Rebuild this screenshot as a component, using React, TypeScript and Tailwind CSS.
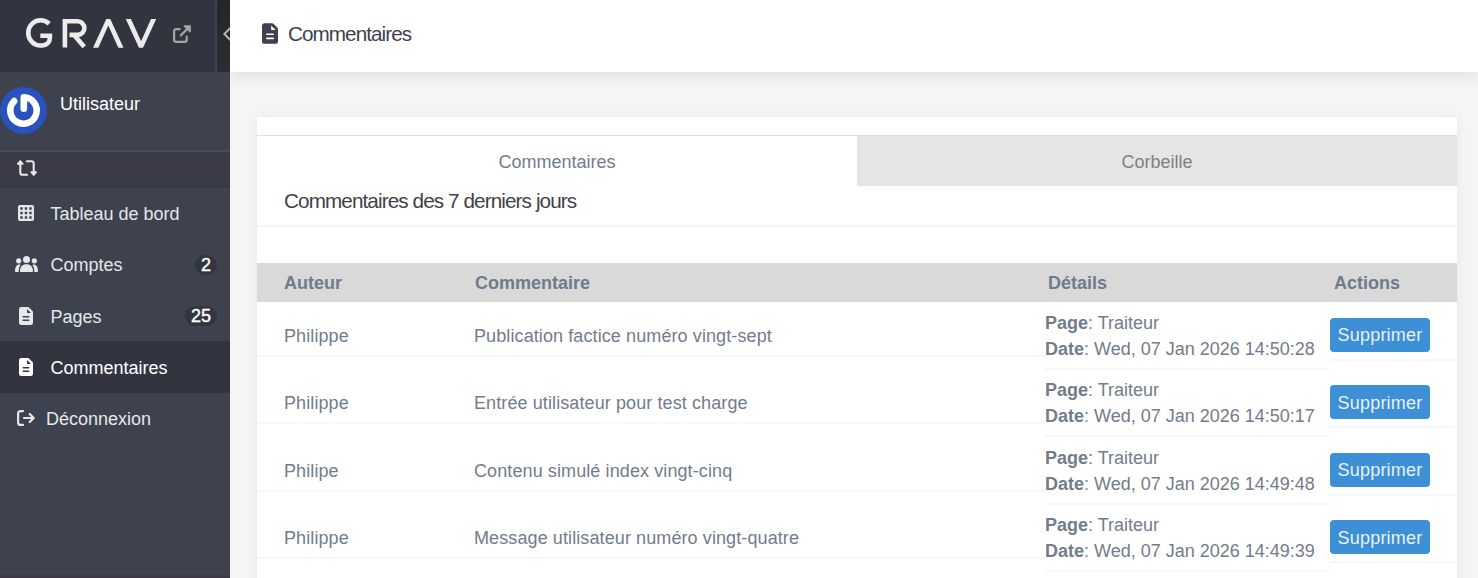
const comments = [
  { author: "Philippe", text: "Publication factice numéro vingt-sept", date: "Wed, 07 Jan 2026 14:50:28" },
  { author: "Philippe", text: "Entrée utilisateur pour test charge", date: "Wed, 07 Jan 2026 14:50:17" },
  { author: "Philipe", text: "Contenu simulé index vingt-cinq", date: "Wed, 07 Jan 2026 14:49:48" },
  { author: "Philippe", text: "Message utilisateur numéro vingt-quatre", date: "Wed, 07 Jan 2026 14:49:39" },
];

function FileIcon({ className }: { className: string }) {
  return (
    <svg className={className} viewBox="0 0 14 18" fill="currentColor">
      <path
        fillRule="evenodd"
        d="M2.3 0H8.8c.5 0 .9.2 1.2.5L13.5 4c.3.3.5.8.5 1.2v10.5A2.3 2.3 0 0 1 11.7 18H2.3A2.3 2.3 0 0 1 0 15.7V2.3A2.3 2.3 0 0 1 2.3 0zM8 2v3c0 .6.4 1 1 1h3zM4.2 9a.7.7 0 0 0 0 1.4h5.600a.7.7 0 0 0 0-1.4zM4.2 12.600a.7.7 0 0 0 0 1.4h5.600a.7.7 0 0 0 0-1.4z"
      />
    </svg>
  );
}

function GridIcon() {
  return (
    <svg className="w-4 h-4" viewBox="0 0 16 16" fill="currentColor">
      <path
        fillRule="evenodd"
        d="M2 0h12a2 2 0 0 1 2 2v12a2 2 0 0 1-2 2H2a2 2 0 0 1-2-2V2a2 2 0 0 1 2-2zM2.3 2.3v2.4h2.4V2.3zM6.8 2.3v2.4h2.4V2.3zM11.3 2.3v2.4h2.4V2.3zM2.3 6.8v2.4h2.4V6.8zM6.8 6.8v2.4h2.4V6.8zM11.3 6.8v2.4h2.4V6.8zM2.3 11.3v2.4h2.4v-2.4zM6.8 11.3v2.4h2.4v-2.4zM11.3 11.3v2.4h2.4v-2.4z"
      />
    </svg>
  );
}

function UsersIcon() {
  return (
    <svg className="w-[23px] h-4" viewBox="0 0 23 16" fill="currentColor">
      <circle cx="11.5" cy="3.5" r="3.5" />
      <circle cx="3.7" cy="4.8" r="2.6" />
      <circle cx="19.3" cy="4.8" r="2.6" />
      <path d="M5.8 16a.8.8 0 0 1-.8-.9C5 11 7.600 8.300 11.500 8.300S18 11 18 15.100a.8.8 0 0 1-.8.9z" />
      <path d="M5.600 9C4.200 10.700 3.700 12.800 3.700 16H.8a.8.8 0 0 1-.8-.8C0 11 1.900 8.600 4.200 8.600c.5 0 1 .1 1.400.4z" />
      <path d="M17.400 9c1.400 1.700 1.900 3.800 1.900 7h2.900a.8.8 0 0 0 .8-.8c0-4.200-1.900-6.600-4.200-6.600-.5 0-1 .1-1.400.4z" />
    </svg>
  );
}

function LogoutIcon() {
  return (
    <svg className="w-[18px] h-4" viewBox="0 0 18 16" fill="none" stroke="currentColor" strokeWidth="2.2" strokeLinecap="round" strokeLinejoin="round">
      <path d="M6 1.100H3.600A2.500 2.500 0 0 0 1.100 3.600v8.800a2.500 2.500 0 0 0 2.500 2.500H6M7 8h9.600M12.700 4l4 4-4 4" />
    </svg>
  );
}

function RetweetIcon() {
  return (
    <svg className="w-5 h-4" viewBox="0 0 20 16" fill="none" stroke="currentColor" strokeWidth="2.1" strokeLinecap="round" strokeLinejoin="round">
      <path d="M3.300 3.500v8.900c0 1.500.8 2.400 2.300 2.400h4.500M9.900 1.200h4.500c1.500 0 2.300.9 2.300 2.400v8.900" />
      <path d="M.9 3.900 3.300 1l2.400 2.900zM14.300 12.100l2.400 2.900 2.400-2.900z" fill="currentColor" strokeWidth="1.700" />
    </svg>
  );
}

function ExternalIcon() {
  return (
    <svg className="w-[18px] h-[18px]" viewBox="0 0 18 18" fill="none" stroke="currentColor" strokeWidth="2.2" strokeLinecap="round" strokeLinejoin="round">
      <path d="M6.600 4.200H3.300A2.200 2.200 0 0 0 1.100 6.400v8.300a2.200 2.200 0 0 0 2.200 2.200h8.200a2.200 2.200 0 0 0 2.200-2.200V11.700M7.800 10.400 14.500 3.700" />
      <path d="M11.400 1.100h5.700v5.700z" fill="currentColor" strokeWidth="1.500" />
    </svg>
  );
}

function GravLogo() {
  return (
    <svg className="w-[131px] h-[30px]" viewBox="0 0 131 30" fill="none" stroke="currentColor" strokeWidth="4.600">
      <path d="M23.200 5.700C20.700 3.400 17.900 2.300 14.700 2.300A12.400 12.400 0 0 0 2.300 14.900 12.400 12.400 0 0 0 14.700 27.500H15.500C21 27.500 23.900 24 23.900 19.500V17.700H14.300" />
      <path d="M38.900 29.500V3.300H51.600a6.800 6.800 0 0 1 0 13.600H43.500M48.500 17.500 58.200 28.800" />
      <path
        stroke="none"
        fill="currentColor"
        d="M67 29.700 80.300 1h4L97.500 29.700H92.300L82.300 7.600 72.300 29.700zM99.800 1h5.200l10.100 22.200L125 1h5.200L117 29.700h-4z"
      />
    </svg>
  );
}

function GravatarLogo() {
  return (
    <svg className="w-[47px] h-[47px]" viewBox="0 0 47 47" fill="none" stroke="white" strokeWidth="6.6" strokeLinecap="round">
      <circle cx="23.500" cy="23.500" r="23.500" fill="#2a52be" stroke="none" />
      <path d="M23.800 21.700V10.300A13.200 13.200 0 1 1 14.200 14.100" strokeLinejoin="round" />
    </svg>
  );
}

const menu = [
  { label: "Tableau de bord", icon: <GridIcon /> },
  { label: "Comptes", icon: <UsersIcon />, count: 2 },
  { label: "Pages", icon: <FileIcon className="w-[14px] h-[18px]" />, count: 25 },
  { label: "Commentaires", icon: <FileIcon className="w-[14px] h-[18px]" />, active: true },
];

function Sidebar() {
  return (
    <aside className="relative z-10 flex flex-col w-[230px] shrink-0 bg-[#3d424e] border-b-[3px] border-[#40394a] text-[#e6e7e9]">
      <div className="flex h-[72px] shrink-0">
        <div className="flex w-[217px] bg-[#32353f] border-r-2 border-[#3d424e] pl-[26px]">
          <div className="pt-[18px] text-[#ececec]">
            <GravLogo />
          </div>
          <div className="pt-[25px] pl-[16px] text-[#a3a5a9]">
            <ExternalIcon />
          </div>
        </div>
        <div className="flex items-center w-[13px] pl-[6px] pb-[5px] overflow-hidden bg-linear-to-b from-[#24262b] to-[#2b2d33]">
          <svg className="w-[8px] h-[14px] shrink-0" viewBox="0 0 8 14" fill="none" stroke="#b5b6b9" strokeWidth="2">
            <path d="M7.300 1 1.400 7l5.900 6" />
          </svg>
        </div>
      </div>

      <div className="flex h-[80px] shrink-0 border-b-2 border-[#484e5b] pt-[15px]">
        <GravatarLogo />
        <p className="pl-[13px] pt-1 leading-[27px] text-white">Utilisateur</p>
      </div>
      <div className="flex h-9 shrink-0 bg-[#3a3b47] border-b-2 border-[#383944] pt-2 pl-[17px]">
        <RetweetIcon />
      </div>

      <ul className="-mt-[0.5px]">
        {menu.map((item) => (
          <li
            key={item.label}
            className={`flex items-center h-[51.3px] ${item.active ? "bg-[#32353f] text-white" : ""}`}
          >
            <span className="flex justify-center w-[53px] pr-[1px] -mr-[2.5px] shrink-0">{item.icon}</span>
            <span className="pt-[3px]">{item.label}</span>
            {item.count && (
              <span className="ml-auto mr-[13px] mt-[1px] px-[6px] h-5 leading-[21px] rounded-full bg-[#32353f] text-white [-webkit-text-stroke:0.4px_white]">
                {item.count}
              </span>
            )}
          </li>
        ))}
        <li className="flex items-center h-[51.3px] pl-[17px]">
          <LogoutIcon />
          <span className="pl-[11px] pt-[3px]">Déconnexion</span>
        </li>
      </ul>
    </aside>
  );
}

function CommentsTable() {
  return (
    <div className="text-[#737c8b]">
      <div className="flex h-[39px] leading-[41px] bg-[#d9d9d9] font-bold text-[#6f7a8a]">
        <div className="w-[218px] pl-[27px]">Auteur</div>
        <div className="w-[573px]">Commentaire</div>
        <div className="w-[286px]">Détails</div>
        <div>Actions</div>
      </div>
      {comments.map((c) => (
        <div key={c.date} className="flex items-center h-[67.5px]">
          <div className="w-[217px] h-[42px] pt-2 leading-[26px] pl-[27px] border-b-2 border-[#f7f7f7] tracking-[0.1px]">{c.author}</div>
          <div className="w-[571px] h-[42px] pt-2 leading-[26px] border-b-2 border-[#f7f7f7] tracking-[0.1px]">{c.text}</div>
          <div className="w-[285px] h-full pt-[7.5px] leading-[26px] border-b-2 border-[#f7f7f7] whitespace-nowrap">
            <p><b>Page</b>: Traiteur</p>
            <p><b>Date</b>: {c.date}</p>
          </div>
          <div className="flex-1 h-[50.4px] pt-[7.3px] border-b-2 border-[#f7f7f7]">
            <button className="block w-[100px] h-[34px] pt-[2px] rounded-[4px] bg-[#3d8fd6] text-[#e8f2fb] tracking-[0.2px]">Supprimer</button>
          </div>
        </div>
      ))}
    </div>
  );
}

function App() {
  return (
    <div className="flex h-[578px] overflow-hidden bg-[#f5f5f5] text-[18px] font-['Liberation_Sans',Arial,sans-serif]">
      <Sidebar />
      <main className="flex-1">
        <header className="relative flex h-[72px] bg-white pl-8 pt-[23px] text-[#3d424e] shadow-[0_4px_16px_rgba(0,0,0,0.09)]">
          <FileIcon className="w-4 h-[21px]" />
          <h1 className="pl-[10px] text-[20.7px] leading-[21px] tracking-[-0.95px]">Commentaires</h1>
        </header>
        <section className="w-[1200px] h-[600px] mt-[45px] ml-[27px] pt-[18px] bg-white shadow-[0_0_14px_rgba(0,0,0,0.06)]">
          <div className="flex h-[51px] border-t border-[#e0e0e0] text-center leading-[53px]">
            <div className="w-1/2 h-[50px] text-[#737c8b]">Commentaires</div>
            <div className="w-1/2 h-[50px] bg-[#e5e5e5] text-[#808080]">Corbeille</div>
          </div>
          <h2 className="h-[41px] mb-9 pl-[27px] border-b-2 border-[#f5f5f5] text-[20.7px] leading-[29px] tracking-[-0.9px] text-[#414147]">
            Commentaires des 7 derniers jours
          </h2>
          <CommentsTable />
        </section>
      </main>
    </div>
  );
}

export default App;
